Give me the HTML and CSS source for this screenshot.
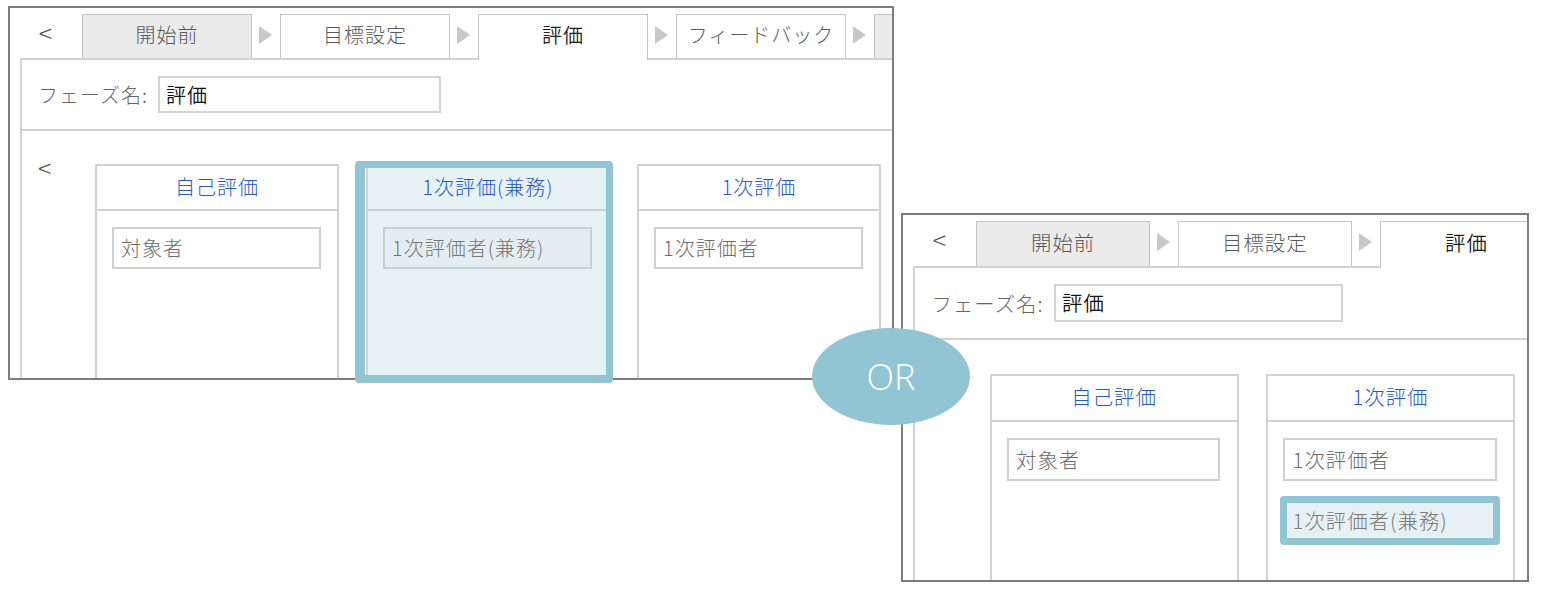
FILE: index.html
```html
<!DOCTYPE html>
<html lang="ja">
<head>
  <meta charset="UTF-8">
  <title>評価フェーズ設定</title>
  <meta name="viewport" content="width=device-width, initial-scale=1.0">
  <link rel="stylesheet" href="styles.css">
</head>
<body>
  <div class="sheet">

    <!-- pattern 1: separate column for the concurrent evaluator -->
    <div class="frame first">
      <div class="ui">
        <div class="tabs">
          <span class="tab-back">&lt;</span>
          <div class="tab done">開始前</div>
          <span class="tab-arrow"></span>
          <div class="tab">目標設定</div>
          <span class="tab-arrow"></span>
          <div class="tab active">評価</div>
          <span class="tab-arrow"></span>
          <div class="tab">フィードバック</div>
          <span class="tab-arrow"></span>
          <div class="tab done"></div>
        </div>
        <div class="panel">
          <div class="name-row">
            <span class="name-label">フェーズ名:</span>
            <div class="name-input">評価</div>
          </div>
          <div class="steps">
            <span class="steps-back">&lt;</span>
            <div class="cards">
              <div class="card">
                <div class="card-head">自己評価</div>
                <div class="card-body">
                  <div class="slot">対象者</div>
                </div>
              </div>
              <div class="card marked">
                <div class="card-head">1次評価(兼務)</div>
                <div class="card-body">
                  <div class="slot">1次評価者(兼務)</div>
                </div>
              </div>
              <div class="card">
                <div class="card-head">1次評価</div>
                <div class="card-body">
                  <div class="slot">1次評価者</div>
                </div>
              </div>
            </div>
          </div>
        </div>
      </div>
    </div>

    <!-- pattern 2: concurrent evaluator inside the same column -->
    <div class="frame second">
      <div class="ui">
        <div class="tabs">
          <span class="tab-back">&lt;</span>
          <div class="tab done">開始前</div>
          <span class="tab-arrow"></span>
          <div class="tab">目標設定</div>
          <span class="tab-arrow"></span>
          <div class="tab active">評価</div>
        </div>
        <div class="panel">
          <div class="name-row">
            <span class="name-label">フェーズ名:</span>
            <div class="name-input">評価</div>
          </div>
          <div class="steps">
            <span class="steps-back">&lt;</span>
            <div class="cards">
              <div class="card">
                <div class="card-head">自己評価</div>
                <div class="card-body">
                  <div class="slot">対象者</div>
                </div>
              </div>
              <div class="card">
                <div class="card-head">1次評価</div>
                <div class="card-body">
                  <div class="slot">1次評価者</div>
                  <div class="slot marked">1次評価者(兼務)</div>
                </div>
              </div>
            </div>
          </div>
        </div>
      </div>
    </div>

    <div class="or">OR</div>
  </div>
</body>
</html>
```

FILE: styles.css
```css
body {
  margin: 0;
  background: #fff;
  font-family: "Noto Sans CJK JP", "Noto Sans", sans-serif;
  font-weight: 300;
  letter-spacing: 1px;
}
.sheet {
  position: relative;
  width: 1541px;
  height: 591px;
  overflow: hidden;
}

/* the two screenshots sit on the sheet like windows */
.frame {
  position: absolute;
  box-sizing: border-box;
  border: 2px solid #7d7d7d;
  background: #fff;
}
.frame.first {
  left: 8px;
  top: 6px;
  width: 886px;
  height: 374px;
}
.frame.second {
  left: 901px;
  top: 213px;
  width: 628px;
  height: 369px;
  overflow: hidden;
}
.ui {
  display: flex;
  flex-direction: column;
  height: 100%;
}
.frame.second .ui {
  zoom: 1.02; /* second shot was captured a little larger */
}

/* phase tabs */
.tabs {
  display: flex;
  align-items: flex-start;
  flex-shrink: 0;
  height: 52px;
  box-sizing: border-box;
  padding-top: 6px;
  margin-bottom: -2px;
  overflow: hidden;
  position: relative;
  z-index: 1;
}
.tab-back {
  width: 72px;
  flex-shrink: 0;
  text-align: center;
  font-size: 25px;
  line-height: 36px;
  color: #555;
}
.tab {
  width: 170px;
  height: 44px;
  flex-shrink: 0;
  box-sizing: border-box;
  border: 1px solid #c4c4c4;
  border-bottom: none;
  background: #fff;
  text-align: center;
  font-size: 20px;
  line-height: 40px;
  color: #5a5a5a;
}
.tab.done {
  background: #ebebeb;
}
.tab.active {
  height: 46px;
  color: #1e1e1e;
  font-weight: 350;
}
.tab-arrow {
  flex-shrink: 0;
  width: 0;
  height: 0;
  border-left: 13px solid #c8c8c8;
  border-top: 9px solid transparent;
  border-bottom: 9px solid transparent;
  margin: 12px 8px 0 7px;
}

/* phase body */
.panel {
  flex: 1;
  min-height: 0;
  display: flex;
  flex-direction: column;
  margin-left: 10px;
  border-top: 2px solid #d2d2d2;
  border-left: 2px solid #d2d2d2;
}
.name-row {
  flex-shrink: 0;
  display: flex;
  align-items: center;
  height: 69px;
  padding-left: 16px;
  border-bottom: 2px solid #d2d2d2;
}
.name-label {
  width: 120px;
  font-size: 20px;
  color: #666;
}
.name-input {
  width: 283px;
  height: 37px;
  box-sizing: border-box;
  border: 2px solid #d4d4d4;
  padding-left: 6px;
  font-size: 20px;
  font-weight: 350;
  line-height: 33px;
  color: #111;
}
.steps {
  flex: 1;
  min-height: 0;
  display: flex;
  padding: 33px 0 0 16px;
}
.steps-back {
  width: 57px;
  flex-shrink: 0;
  margin-top: -12px;
  font-size: 25px;
  line-height: 30px;
  color: #555;
}
.cards {
  display: flex;
  gap: 27px;
}

/* evaluation step cards */
.card {
  width: 244px;
  flex-shrink: 0;
  box-sizing: border-box;
  border: 2px solid #d2d2d2;
  border-bottom: none;
  background: #fff;
}
.card-head {
  height: 43px;
  border-bottom: 2px solid #d2d2d2;
  text-align: center;
  font-size: 20px;
  line-height: 41px;
  color: #2757cc;
}
.card-body {
  display: flex;
  flex-direction: column;
  gap: 18px;
  padding: 16px 16px 0 15px;
}
.slot {
  height: 42px;
  box-sizing: border-box;
  border: 2px solid #d0d0d0;
  padding-left: 7px;
  font-size: 20px;
  line-height: 38px;
  color: #6b6b6b;
}

/* highlighted "concurrent" variants */
.card.marked {
  position: relative;
  background: #e7f2f5;
}
.card.marked .card-head {
  border-color: #c7d2d5;
}
.card.marked .slot {
  background: #e3eef1;
  border-color: #c6d1d4;
  color: #777;
}
.card.marked::after {
  content: "";
  position: absolute;
  left: -13px;
  top: -5px;
  right: -5px;
  bottom: -5px;
  border: solid #92c5d3;
  border-width: 7px 7px 8px 10px;
  border-radius: 4px;
}
.slot.marked {
  position: relative;
  background: #e6f1f4;
  color: #7a7a7a;
}
.slot.marked::after {
  content: "";
  position: absolute;
  inset: -5px;
  border: 7px solid #92c5d3;
  border-radius: 4px;
}

.or {
  position: absolute;
  left: 812px;
  top: 328px;
  width: 158px;
  height: 97px;
  border-radius: 50%;
  background: #92c5d3;
  display: flex;
  align-items: center;
  justify-content: center;
  font-family: "Open Sans", sans-serif;
  font-size: 36px;
  letter-spacing: 0;
  color: #fff;
}
```
